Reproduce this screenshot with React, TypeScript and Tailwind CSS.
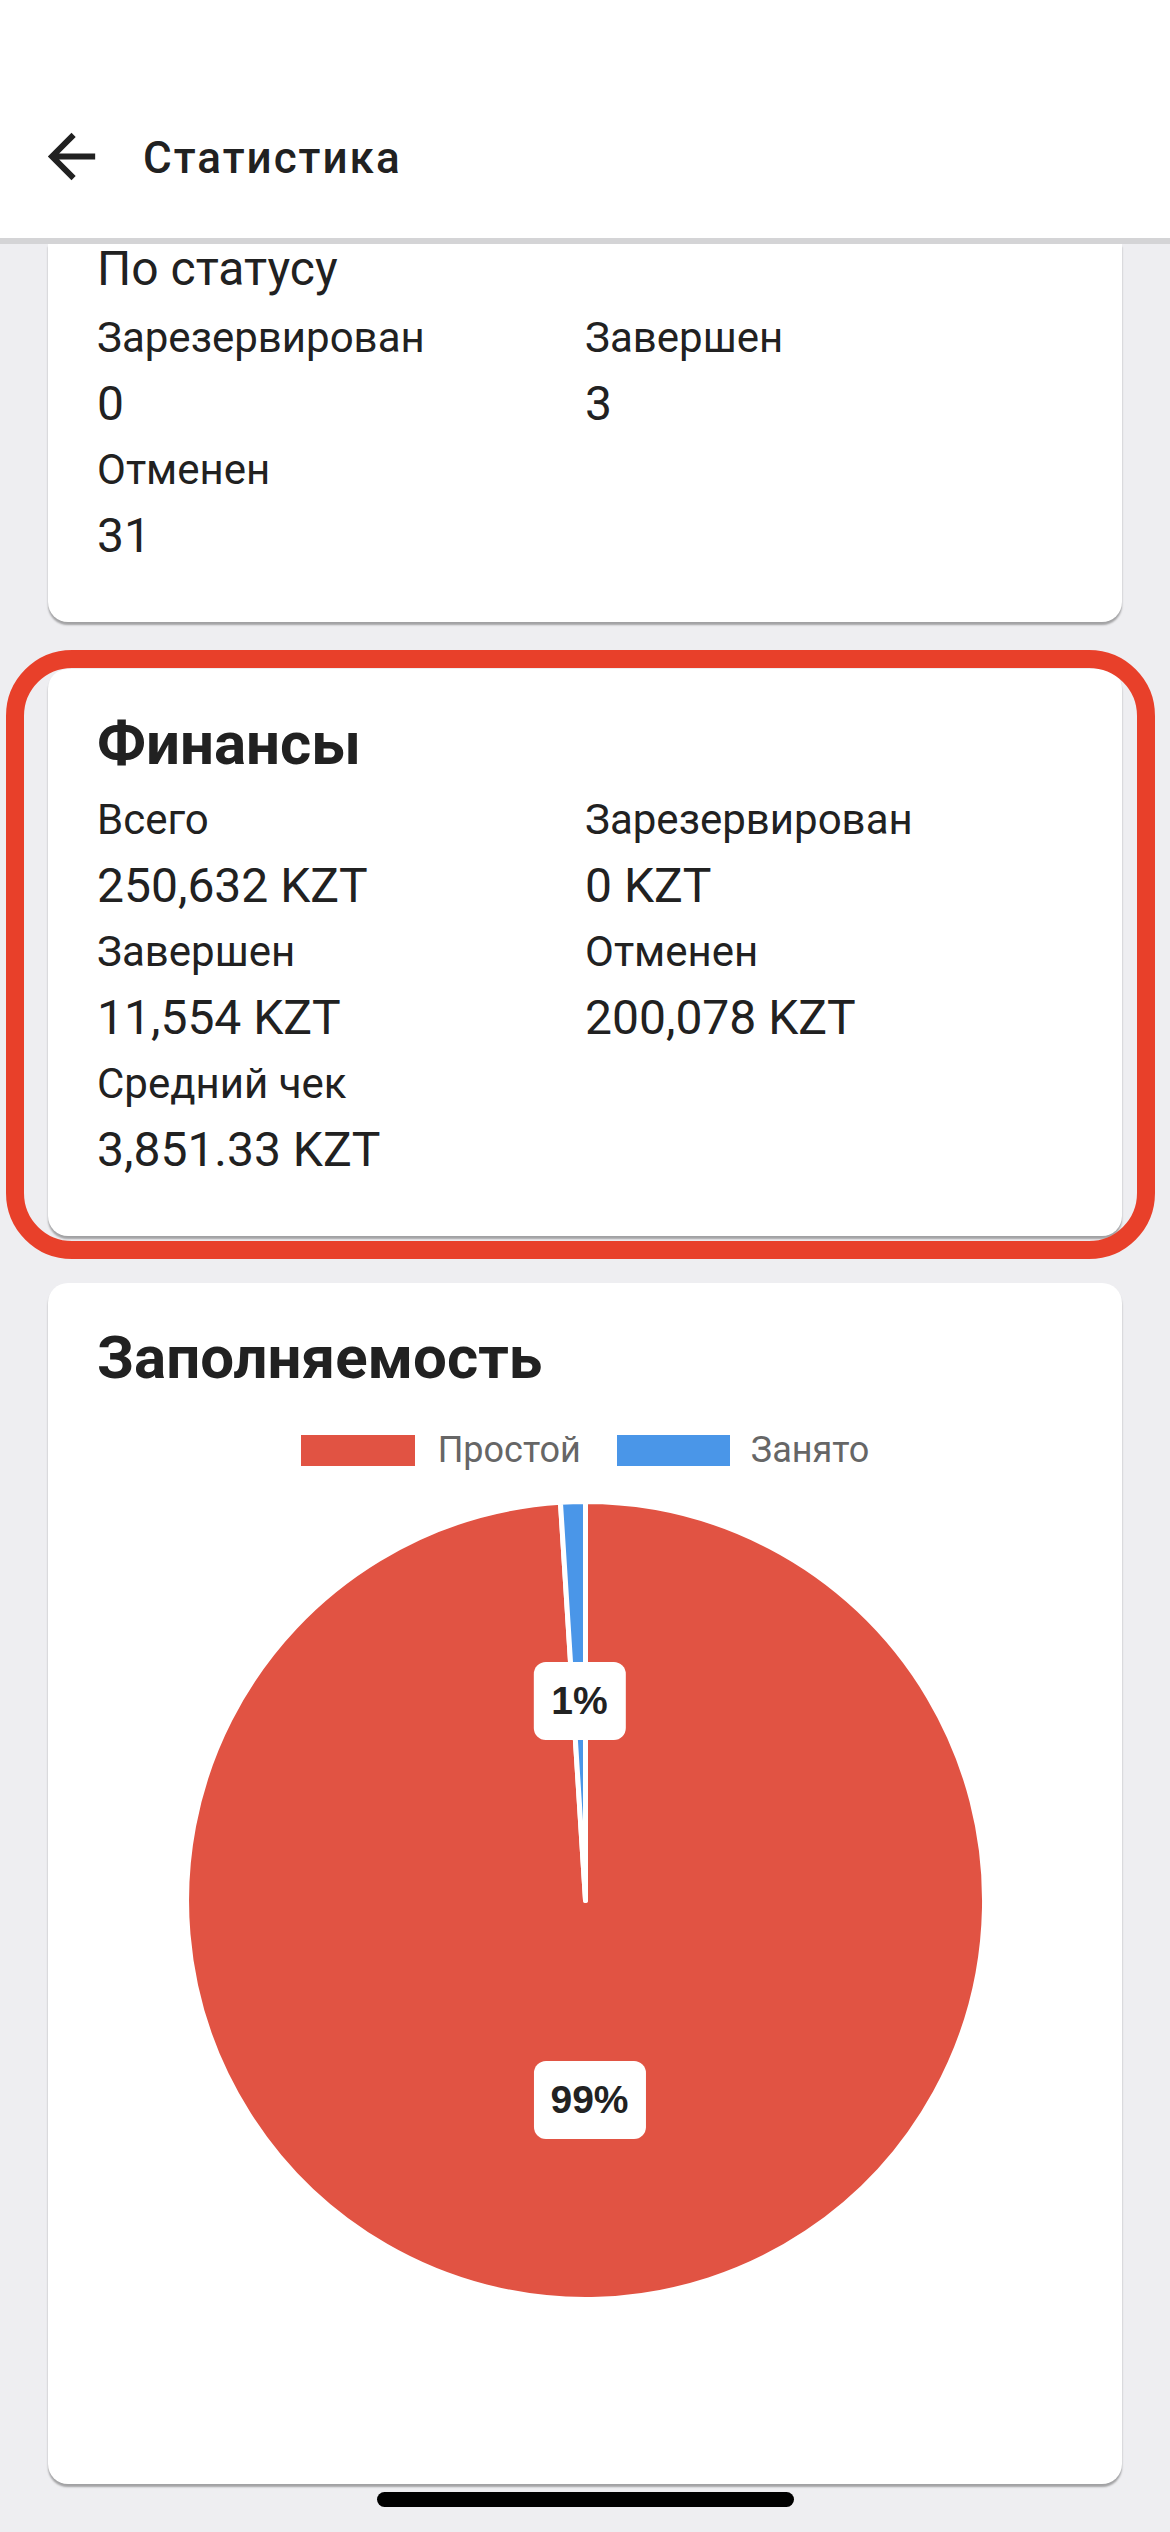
import React from 'react';

const cardShadow = 'shadow-[0_3px_2px_rgba(0,0,0,0.32)]';

type Stat = { label: string; value: string };

const statusStats: Stat[] = [
  { label: 'Зарезервирован', value: '0' },
  { label: 'Завершен', value: '3' },
  { label: 'Отменен', value: '31' },
];

const financeStats: Stat[] = [
  { label: 'Всего', value: '250,632 KZT' },
  { label: 'Зарезервирован', value: '0 KZT' },
  { label: 'Завершен', value: '11,554 KZT' },
  { label: 'Отменен', value: '200,078 KZT' },
  { label: 'Средний чек', value: '3,851.33 KZT' },
];

const StatGrid: React.FC<{ items: Stat[] }> = ({ items }) => (
  <div className="grid grid-cols-2">
    {items.map((s) => (
      <div key={s.label} className="flex flex-col">
        <span className="text-[42px] leading-[66px] text-[#212121]">{s.label}</span>
        <span className="text-[48px] leading-[66px] text-[#212121]">{s.value}</span>
      </div>
    ))}
  </div>
);

// pie: 99% "Простой" clockwise from top, 1% "Занято" just before the top
const PieChart: React.FC = () => {
  const r = 399;
  const c = 401.5;
  const a = (-3.6 * Math.PI) / 180;
  const sx = (c + r * Math.sin(a)).toFixed(2);
  const sy = (c - r * Math.cos(a)).toFixed(2);
  return (
    <div className="relative mx-auto w-[803px] h-[803px]">
      <svg width="803" height="803" viewBox="0 0 803 803">
        <path
          d={`M${c} ${c} L${c} ${c - r} A${r} ${r} 0 1 1 ${sx} ${sy} Z`}
          fill="#e15343"
          stroke="#fff"
          strokeWidth="5"
          strokeLinejoin="round"
        />
        <path
          d={`M${c} ${c} L${sx} ${sy} A${r} ${r} 0 0 1 ${c} ${c - r} Z`}
          fill="#4a96e8"
          stroke="#fff"
          strokeWidth="5"
          strokeLinejoin="round"
        />
      </svg>
      <div className="absolute left-[396px] top-[202px] -translate-x-1/2 -translate-y-1/2 bg-white rounded-[12px] px-[18px] py-[16px] [font-family:'Liberation_Sans',Arial,sans-serif] font-bold text-[39px] leading-[46px] text-[#222]">
        1%
      </div>
      <div className="absolute left-[406px] top-[601px] -translate-x-1/2 -translate-y-1/2 bg-white rounded-[12px] px-[17px] py-[16px] [font-family:'Liberation_Sans',Arial,sans-serif] font-bold text-[39px] leading-[46px] text-[#222]">
        99%
      </div>
    </div>
  );
};

export default function App() {
  return (
    <div className="relative min-h-[2532px] w-[1170px] bg-[#eeeef1] [font-family:Roboto,sans-serif] text-[#212121] overflow-hidden">
      {/* top bar */}
      <header className="bg-white h-[244px] border-b-[6px] border-[#d4d4d6] pt-[121px]">
        <div className="flex items-start">
          <svg className="ml-[36px]" width="71" height="71" viewBox="0 0 24 24" fill="#212121">
            <path d="M20 11H7.83l5.59-5.59L12 4l-8 8 8 8 1.41-1.41L7.83 13H20v-2z" />
          </svg>
          <h1 className="ml-[36px] mt-[13px] text-[44px] leading-[48px] tracking-[2px] font-medium text-[#212121]">
            Статистика
          </h1>
        </div>
      </header>

      <main className="flex flex-col px-[48px]">
        {/* status card, scrolled partly under the bar */}
        <section className={`bg-white rounded-b-[20px] ${cardShadow} px-[49px] pb-[53px]`}>
          <h2 className="text-[48px] leading-[50px] text-[#212121] mb-[11px]">По статусу</h2>
          <StatGrid items={statusStats} />
        </section>

        {/* finance card with highlight */}
        <section className={`relative mt-[47px] bg-white rounded-[20px] ${cardShadow} px-[49px] pt-[39px] pb-[53px]`}>
          <div className="pointer-events-none absolute -left-[42px] -top-[19px] -right-[33px] -bottom-[23px] rounded-[66px] border-[18px] border-[#e8402a]" />
          <h2 className="text-[60px] leading-[72px] font-bold text-[#212121] mb-[7px]">Финансы</h2>
          <StatGrid items={financeStats} />
        </section>

        {/* occupancy card */}
        <section className={`mt-[47px] bg-white rounded-[20px] ${cardShadow} pt-[39px] pb-[182px]`}>
          <h2 className="px-[49px] text-[60px] leading-[72px] font-bold text-[#212121]">Заполняемость</h2>
          <div className="mt-[41px] flex items-center justify-center">
            <span className="w-[114px] h-[31px] bg-[#e15343]" />
            <span className="ml-[23px] text-[36px] leading-[31px] text-[#666]">Простой</span>
            <span className="ml-[36px] w-[113px] h-[31px] bg-[#4a96e8]" />
            <span className="ml-[21px] text-[36px] leading-[31px] text-[#666]">Занято</span>
          </div>
          <div className="mt-[33px]">
            <PieChart />
          </div>
        </section>

        <div className="mt-[8px] mx-auto w-[417px] h-[15px] rounded-full bg-black" />
      </main>
    </div>
  );
}
